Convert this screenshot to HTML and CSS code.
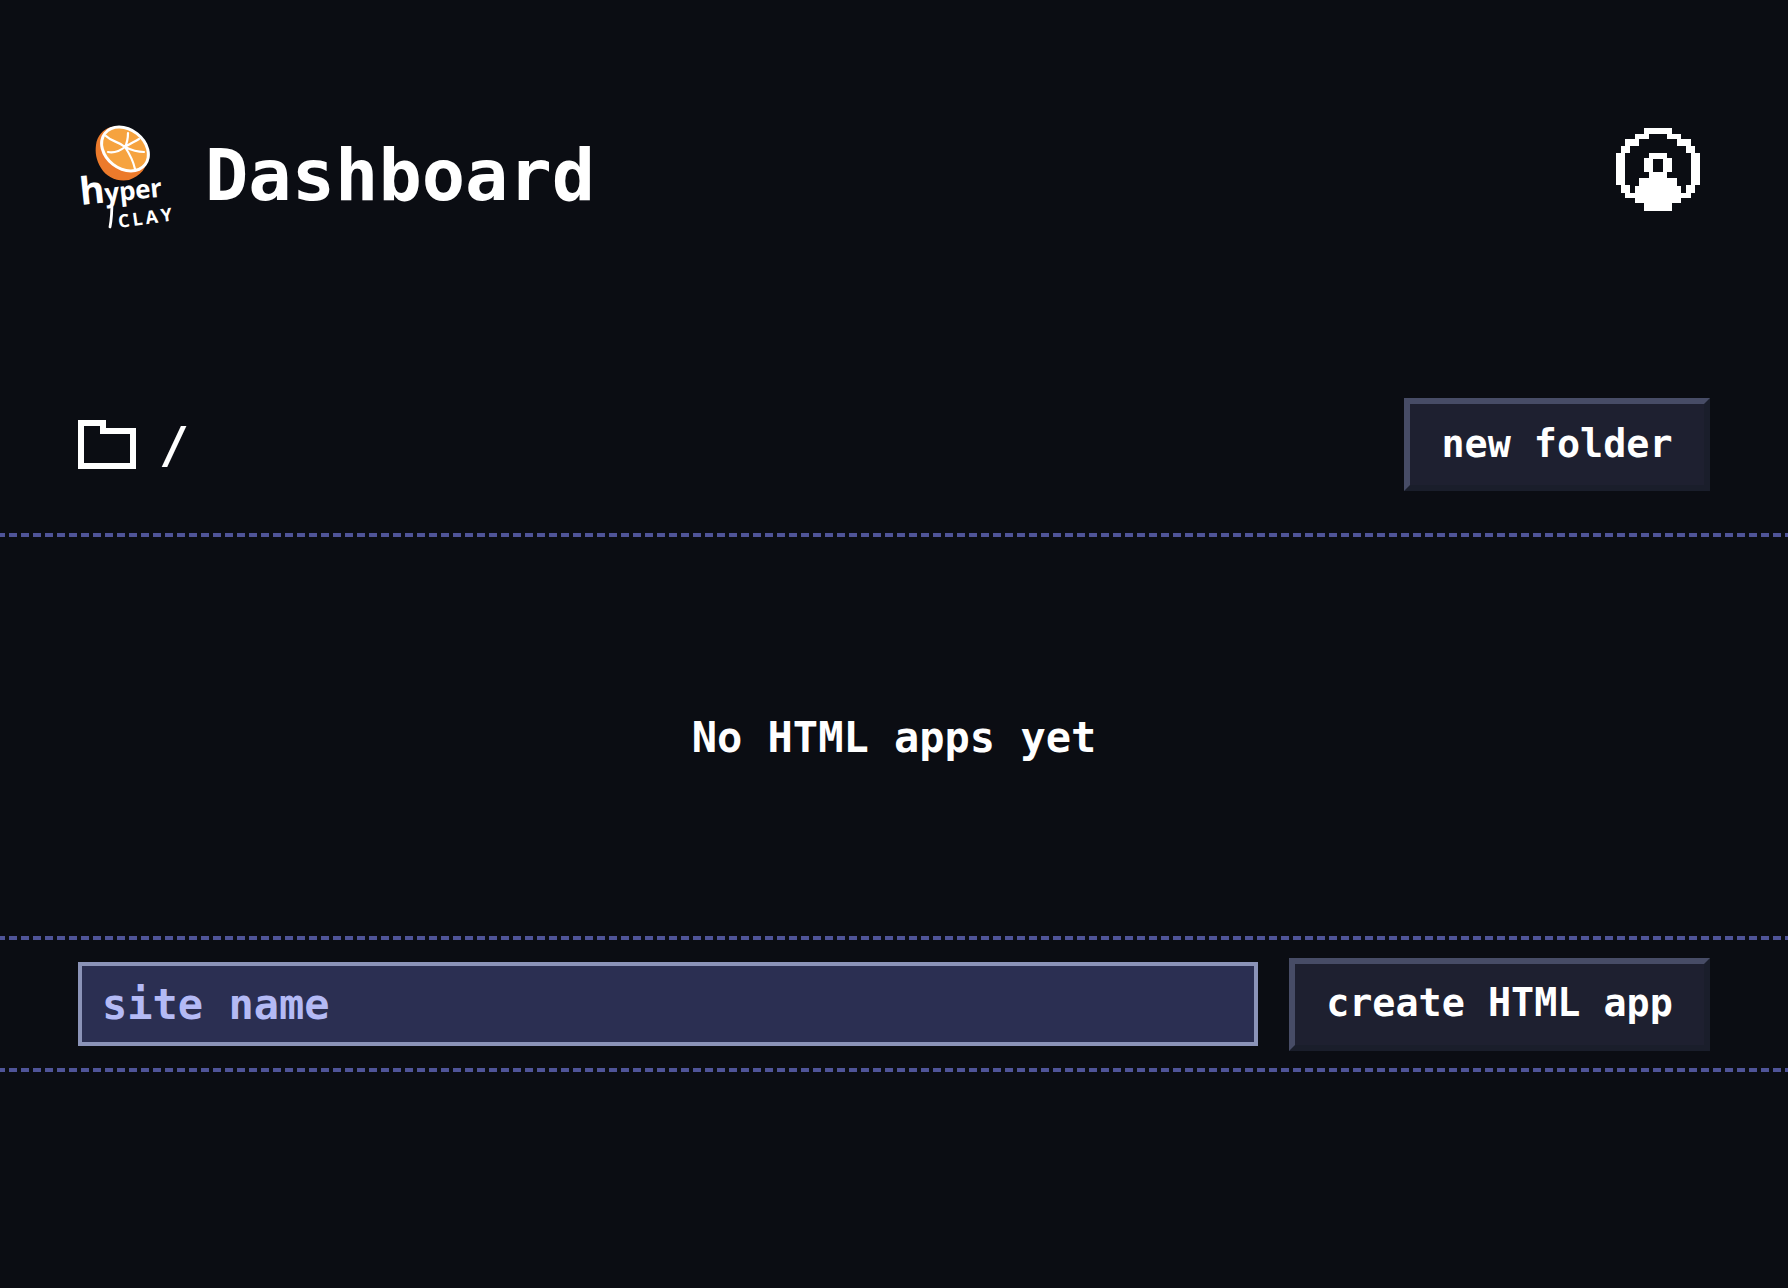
FILE: index.html
```html
<!DOCTYPE html>
<html lang="en">
<head>
<meta charset="utf-8">
<title>Dashboard</title>
<link rel="stylesheet" href="styles.css">
</head>
<body>
<header class="header">
  <div class="brand">
    <svg class="logo" viewBox="72 116 104 120" aria-label="hyperclay">
      <g transform="translate(-2 2)">
        <path class="rind" d="M113 125 C119 124 126 125 133 128 C143 133 151 143 150 153 C150 166 142 174 131 178 C120 180 109 176 103 166 C98 158 97 150 98 143 C99 134 105 127 113 125Z"/>
        <ellipse class="rim" cx="127" cy="147" rx="27" ry="21" transform="rotate(38 127 147)"/>
        <ellipse class="flesh" cx="127" cy="147" rx="24" ry="18" transform="rotate(38 127 147)"/>
        <path class="seg" d="M108 134 C114 140 120 139 127 145 M130 131 C130 136 129 141 127 145 M146 150 C140 150 133 148 127 145 M110 150 C116 151 122 149 127 145 M137 167 C135 158 131 151 127 145 M141 137 C136 140 131 142 127 145"/>
      </g>
      <text class="hand hyper" transform="translate(81 205) rotate(-6)"><tspan class="tall">h</tspan>yper</text>
      <text class="hand clay" transform="translate(119 228) rotate(-8)">CLAY</text>
      <path class="stem" d="M112 199 C112 209 112 217 110 227"/>
    </svg>
    <h1 class="title">Dashboard</h1>
  </div>
  <svg class="avatar" viewBox="48 40 252 252" aria-label="profile">
    <path d="M132 40h84v18h-84z M104 58h42v14h-42z M202 58h42v14h-42z M76 72h42v23h-42z M230 72h42v23h-42z M62 95h28v20h-28z M258 95h28v20h-28z M48 115h28v95h-28z M272 115h28v95h-28z M62 210h28v25h-28z M258 210h28v25h-28z M76 235h28v15h-28z M244 235h28v15h-28z M146 115h56v18h-56z M132 130h28v42h-28z M188 130h28v42h-28z M146 172h56v18h-56z M118 190h112v25h-112z M104 215h140v50h-140z M132 265h84v25h-84z"/>
  </svg>
</header>

<section class="toolbar">
  <div class="path">
    <svg class="folder" viewBox="0 0 58 49" aria-hidden="true">
      <path d="M3 3h22v8h30v35H3z"/>
    </svg>
    <span class="slash">/</span>
  </div>
  <button class="btn btn-folder">new folder</button>
</section>

<div class="divider"></div>
<main class="empty">No HTML apps yet</main>
<div class="divider"></div>

<form class="create">
  <input class="name" type="text" placeholder="site name">
  <button class="btn btn-create" type="button">create HTML app</button>
</form>
<div class="divider"></div>
</body>
</html>
```
FILE: styles.css
```css
* { box-sizing: border-box; }
html, body { margin: 0; height: 100%; }
body {
  background: #0b0d13;
  color: #fff;
  font-family: "DejaVu Sans Mono", "Liberation Mono", monospace;
  font-weight: 700;
  overflow: hidden;
}
.header {
  display: flex;
  justify-content: space-between;
  align-items: flex-start;
  padding: 116px 88px 0 72px;
  height: 236px;
}
.brand { display: flex; align-items: center; gap: 29px; }
.logo { width: 104px; height: 120px; display: block; }
.rind { fill: #ec7a2b; }
.rim { fill: #fff; }
.flesh { fill: #f6a33f; }
.seg { fill: none; stroke: #fff; stroke-width: 2.200; stroke-linecap: round; }
.stem { fill: none; stroke: #fff; stroke-width: 2.800; stroke-linecap: round; }
.hand { fill: #fff; font-family: "Open Sans", sans-serif; font-weight: 700; }
.hyper { font-size: 26px; letter-spacing: -0.300px; }
.tall { font-size: 38px; }
.clay { font-size: 18px; letter-spacing: 3px; }
.title {
  margin: 0;
  font-size: 72px;
  line-height: 84px;
  font-weight: 700;
  position: relative;
  top: -1px;
}
.avatar { width: 84px; height: 84px; margin-top: 12px; display: block; fill: #fff; shape-rendering: crispEdges; }
.toolbar {
  display: flex;
  justify-content: space-between;
  align-items: center;
  margin-top: 162px;
  padding: 0 78px;
  height: 93px;
}
.path { display: flex; align-items: center; gap: 23px; }
.folder { width: 58px; height: 49px; display: block; fill: none; stroke: #fff; stroke-width: 6; }
.slash { font-size: 50px; line-height: 56px; font-weight: 700; }
.btn {
  height: 93px;
  background: #1e2030;
  color: #fff;
  border-style: solid;
  border-width: 6px;
  border-color: #474c66 #1a1e2b #1a1e2b #474c66;
  font-family: inherit;
  font-weight: 700;
  font-size: 38.400px;
  padding: 0 0 3px;
  flex: none;
}
.btn-folder { width: 306px; }
.btn-create { width: 421px; }
.divider {
  height: 4px;
  background: linear-gradient(90deg, #4f5498 8px, transparent 8px) 9px 0 / 12px 100% repeat-x;
}
.toolbar + .divider { margin-top: 42px; }
.empty {
  height: 399px;
  padding-top: 2px;
  display: flex;
  align-items: center;
  justify-content: center;
  font-size: 42px;
}
.create {
  display: flex;
  align-items: center;
  gap: 31px;
  padding: 0 78px;
  height: 128px;
}
.name {
  flex: 1;
  min-width: 0;
  height: 84px;
  background: #2b2f52;
  border: 4px solid #8b93b8;
  padding: 0 20px;
  color: #b4baf5;
  font-family: inherit;
  font-weight: 700;
  font-size: 42px;
  outline: none;
  border-radius: 0;
}
.name::placeholder { color: #b4baf5; opacity: 1; }
```
